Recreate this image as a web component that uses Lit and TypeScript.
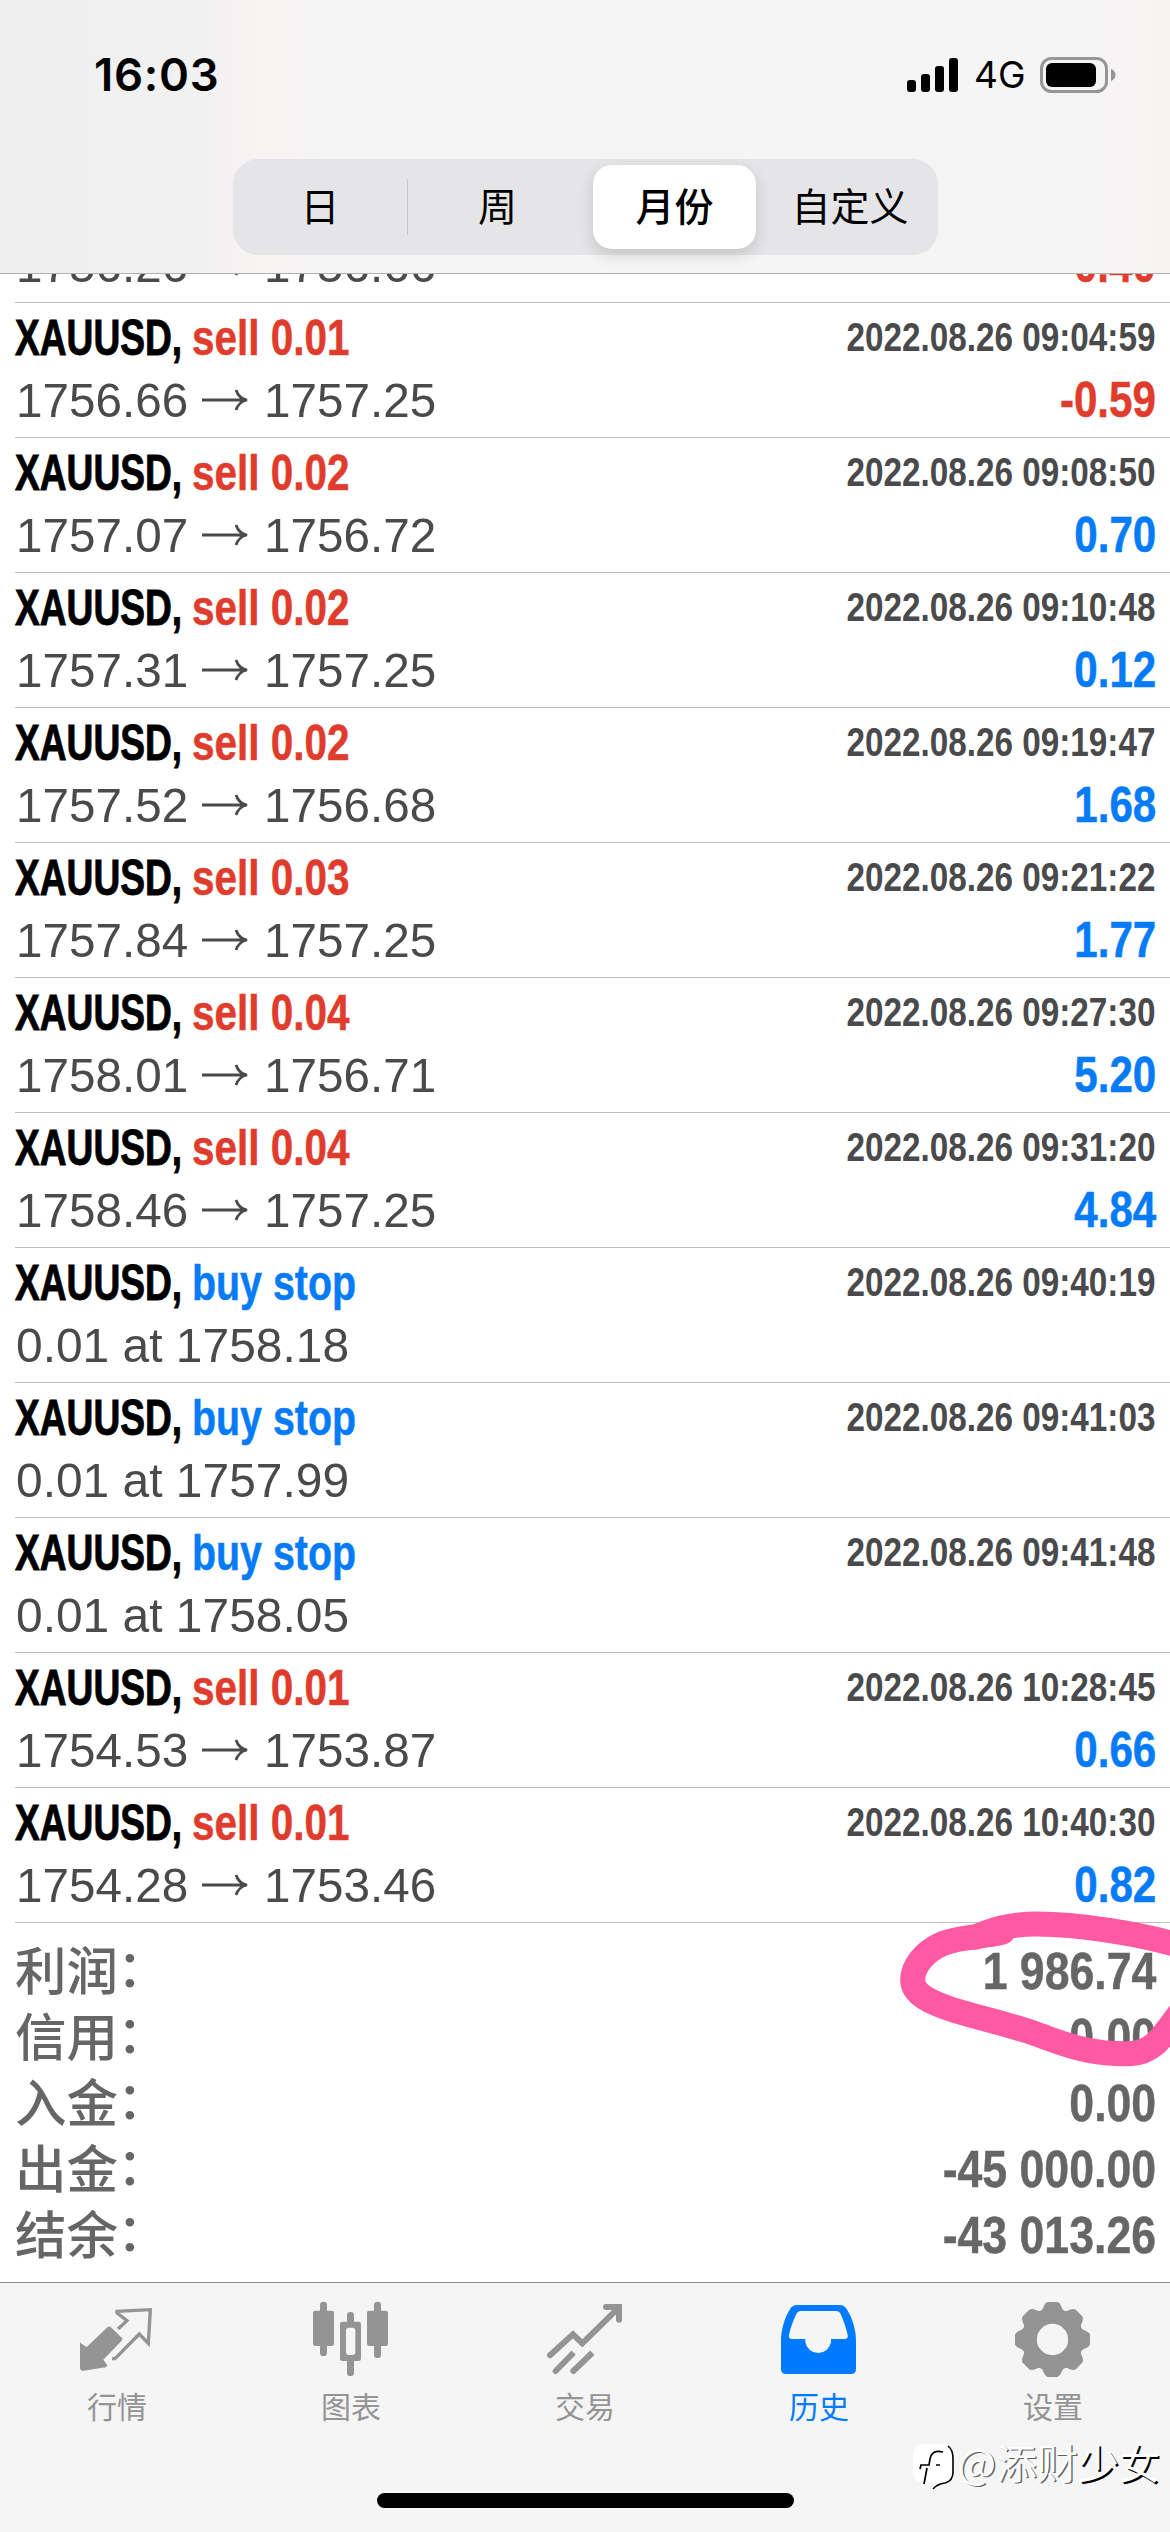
import { LitElement, html, svg, css } from "lit";
import { customElement, property } from "lit/decorators.js";
import { classMap } from "lit/directives/class-map.js";

interface Deal {
  side: "sell" | "buy";
  label: string;
  time: string;
  open: string;
  close?: string;
  profit?: string;
  scrolled?: boolean;
}

const sell = (lot: string, time: string, open: string, close: string, profit: string): Deal => ({
  side: "sell", label: `sell ${lot}`, time: `2022.08.26 ${time}`, open, close, profit,
});
const stop = (time: string, open: string): Deal => ({
  side: "buy", label: "buy stop", time: `2022.08.26 ${time}`, open,
});

const DEALS: Deal[] = [
  { side: "sell", label: "", time: "", open: "1756.26", close: "1756.66", profit: "-0.40", scrolled: true },
  sell("0.01", "09:04:59", "1756.66", "1757.25", "-0.59"),
  sell("0.02", "09:08:50", "1757.07", "1756.72", "0.70"),
  sell("0.02", "09:10:48", "1757.31", "1757.25", "0.12"),
  sell("0.02", "09:19:47", "1757.52", "1756.68", "1.68"),
  sell("0.03", "09:21:22", "1757.84", "1757.25", "1.77"),
  sell("0.04", "09:27:30", "1758.01", "1756.71", "5.20"),
  sell("0.04", "09:31:20", "1758.46", "1757.25", "4.84"),
  stop("09:40:19", "0.01 at 1758.18"),
  stop("09:41:03", "0.01 at 1757.99"),
  stop("09:41:48", "0.01 at 1758.05"),
  sell("0.01", "10:28:45", "1754.53", "1753.87", "0.66"),
  sell("0.01", "10:40:30", "1754.28", "1753.46", "0.82"),
];

const TOTALS = [
  ["利润", "1 986.74"],
  ["信用", "0.00"],
  ["入金", "0.00"],
  ["出金", "-45 000.00"],
  ["结余", "-43 013.26"],
];

@customElement("deal-row")
export class DealRow extends LitElement {
  @property({ attribute: false }) deal!: Deal;

  static styles = css`
    :host { display: block; flex: none; margin-left: 15px; border-bottom: 1px solid #bfbfc1; padding: 0 15px 5px 0; }
    .line { display: flex; height: 61px; line-height: 62px; white-space: pre; padding-top: 4px; font-size: 50px; }
    .line.second { height: 64px; line-height: 64px; padding-top: 0; font-size: 49px; color: #4a4a4c; }
    .squeeze { display: inline-block; transform-origin: 0 50%; }
    .symbol { flex: none; width: 177px; font-weight: 700; color: #000; -webkit-text-stroke: 0.9px #000; }
    .symbol .squeeze { transform: scaleX(0.743); }
    .action { flex: 1; font-weight: 700; -webkit-text-stroke: 0.5px currentColor; }
    .sell { color: #e03c2d; }
    .buy { color: #067bf8; }
    .sell .squeeze { transform: scaleX(0.81); }
    .buy .squeeze { transform: scaleX(0.787); }
    .time { font-size: 40px; font-weight: 700; color: #4a4a4c; line-height: 60px; transform: scaleX(0.832); transform-origin: 100% 50%; }
    .price { flex: none; padding-left: 1px; }
    .price .squeeze { transform: scaleX(0.978); }
    .price.from { width: 183px; }
    .price.from .squeeze, .price.to .squeeze { transform: scaleX(0.972); }
    .arrow { flex: none; width: 64px; display: flex; align-items: center; }
    .arrow svg { width: 52px; height: 26px; display: block; }
    .profit { margin-left: auto; font-size: 50px; font-weight: 700; transform: translateX(1px) scaleX(0.843); transform-origin: 100% 50%; -webkit-text-stroke: 0.5px currentColor; }
    .neg { color: #e03c2d; }
    .pos { color: #067bf8; }
  `;

  render() {
    const d = this.deal;
    const loss = !!d.profit && d.profit.startsWith("-");
    return html`
      ${d.scrolled ? null : html`<div class="line">
        <span class="symbol"><span class="squeeze">XAUUSD,</span></span>
        <span class=${`action ${d.side}`}><span class="squeeze">${d.label}</span></span>
        <span class="time">${d.time}</span>
      </div>`}
      <div class="line second">
        <span class=${classMap({ price: true, from: !!d.close })}><span class="squeeze">${d.open}</span></span>
        ${d.close
          ? html`<span class="arrow"><svg viewBox="0 0 52 26"><path d="M3 13H47M37 3C39 9 43 12 48 13C43 14 39 17 37 23" fill="none" stroke="#4a4a4c" stroke-width="2.8"/></svg></span>
              <span class="price to"><span class="squeeze">${d.close}</span></span>`
          : null}
        ${d.profit ? html`<span class=${classMap({ profit: true, neg: loss, pos: !loss })}>${d.profit}</span>` : null}
      </div>
    `;
  }
}

const TEETH = [0, 45, 90, 135, 180, 225, 270, 315];

const TABS = [
  {
    name: "行情", box: "21 0 240 240",
    art: svg`
      <path d="M34 146L50 156L113 96Q118 92 123 97L156 129Q159 133 155 137L100 194L112 211L108 217L40 227Q31 228 30 219V141Z" fill="currentColor"/>
      <path d="M144 102L171 77L141 54V49L241 44L235 145L208 117L135 191L126 191" fill="none" stroke="currentColor" stroke-width="10"/>`,
  },
  {
    name: "图表", box: "723 0 240 240",
    art: svg`
      <g fill="currentColor">
        <rect x="729" y="47" width="63" height="106" rx="7"/><rect x="750" y="20" width="21" height="163" rx="10"/>
        <rect x="891" y="47" width="63" height="106" rx="7"/><rect x="912" y="20" width="21" height="169" rx="10"/>
        <rect x="831" y="51" width="21" height="45" rx="10"/><rect x="831" y="184" width="21" height="59" rx="10"/>
        <path fill-rule="evenodd" d="M817 80H866Q873 80 873 87V191Q873 198 866 198H817Q810 198 810 191V87Q810 80 817 80ZM837 98Q828 98 828 107V171Q828 180 837 180H847Q856 180 856 171V107Q856 98 847 98Z"/>
      </g>`,
  },
  {
    name: "交易", box: "15 0 240 240",
    art: svg`
      <g fill="none" stroke="currentColor" stroke-width="18" stroke-linecap="round">
        <path d="M30 181L99 118L127 145L234 40"/><path d="M198 36H237V74" stroke-linejoin="miter"/>
        <path d="M47 228L94 180M100 228L150 180"/>
        <path d="M94 180L101 173M150 180L157 173" stroke-linecap="butt"/>
      </g>`,
  },
  {
    name: "历史", box: "717 0 240 240", active: true,
    art: svg`
      <path fill="currentColor" fill-rule="evenodd" d="M770 30H900Q912 30 919 41C938 68 948 106 948 136V222Q948 237 933 237H738Q723 237 723 222V136C723 106 733 68 751 41Q758 30 770 30ZM783 48Q773 48 769 57C760 76 752 97 747 120Q745 132 756 132H796V142A39 38 0 0 0 873 142V132H914Q925 132 923 120C918 97 910 76 902 57Q898 48 888 48Z"/>`,
  },
  {
    name: "设置", box: "369 15 240 240",
    art: svg`
      <circle cx="487.500" cy="148.500" r="67" fill="none" stroke="currentColor" stroke-width="40"/>
      ${TEETH.map((a) => svg`<path transform="rotate(${a} 487.5 148.5)" d="M474 42H501C507 44 508 52 512 60Q516 67 526 71L512 92H463L449 71Q459 67 463 60C467 52 468 44 474 42Z" fill="currentColor" stroke="currentColor" stroke-width="12" stroke-linejoin="round"/>`)}`,
  },
];

@customElement("app-root")
export class AppRoot extends LitElement {
  static styles = css`
    :host {
      display: flex; flex-direction: column; position: relative; box-sizing: border-box;
      width: 1170px; height: 2532px; overflow: hidden; background: #fff;
      font-family: "Liberation Sans", "Noto Sans CJK SC", sans-serif;
    }
    .header {
      flex: none; height: 273px; border-bottom: 1px solid #b0b0b2;
      background: linear-gradient(90deg, #efefef 0%, #f2f1f1 17%, #f7f4f3 23%, #f5f5f5 28%, #f5f5f5 85%, #f6f4f5 95%, #f8f3f2 100%);
    }
    .status { display: flex; align-items: center; height: 149px; padding: 0 54px 0 94px; }
    .clock { flex: 1; font: 600 45.500px/1 Inter, sans-serif; letter-spacing: 0.7px; }
    .bars { width: 52px; height: 36px; margin-right: 15px; }
    .net { font: 400 37px/1 Inter, sans-serif; width: 66px; white-space: nowrap; }
    .battery { width: 76px; height: 36px; }
    .segments {
      display: grid; grid-template-columns: 175px 179px 175px 176px; margin: 10px 0 0 233px;
      width: 705px; height: 96px; border-radius: 25px; background: #e5e5e7;
    }
    .seg { display: flex; align-items: center; justify-content: center; padding-bottom: 5px; font: 400 39px/1 "Noto Sans CJK SC", sans-serif; color: #000; }
    .seg.first { border-right: 1px solid #c9c9cc; margin: 20px 0; }
    .seg.on { font-weight: 500; background: #fff; border-radius: 19px; margin: 6px; box-shadow: 0 6px 16px rgba(0, 0, 0, 0.14); }
    .list { flex: none; height: 1649px; display: flex; flex-direction: column; justify-content: flex-end; overflow: hidden; }
    .totals { flex: none; box-sizing: border-box; height: 359px; padding: 15px 15px 0; color: #666; }
    .total { display: flex; justify-content: space-between; height: 66px; line-height: 66px; white-space: nowrap; }
    .total .name { font-family: "Noto Sans CJK SC", sans-serif; font-size: 51.500px; line-height: 60px; font-weight: 500; }
    .total .colon { position: relative; top: -3px; left: -1px; }
    .total .value { font-size: 52.500px; font-weight: 700; transform: translateX(1px) scaleX(0.85); transform-origin: 100% 50%; -webkit-text-stroke: 0.5px currentColor; }
    .tabbar { flex: 1; border-top: 1px solid #8c8c8e; background: #f5f5f5; display: flex; flex-direction: column; }
    .tabs { display: grid; grid-template-columns: repeat(5, 1fr); height: 210px; }
    .tab { display: flex; flex-direction: column; align-items: center; padding-top: 12px; color: #949494; font: 400 30px/36px "Noto Sans CJK SC", sans-serif; }
    .tab.active { color: #007aff; }
    .icon { width: 80px; height: 80px; margin-bottom: 12px; overflow: visible; }
    .home { width: 417px; height: 15px; border-radius: 8px; background: #000; margin: 0 auto; }
    .marker { position: absolute; left: 820px; top: 1880px; width: 350px; height: 210px; }
    .watermark { position: absolute; right: 10px; top: 2438px; display: flex; align-items: center; color: #fff; font: 350 41px/50px "Noto Sans CJK SC", sans-serif; white-space: nowrap; }
    .handle { position: relative; top: -3px; text-shadow: 1.500px 1.200px 0.500px rgba(0, 0, 0, 0.6); }
    .handle b { font-weight: 350; text-shadow: 1.700px 1.500px 0.300px #000; }
    .logo { width: 46px; height: 52px; margin-right: 2px; position: relative; top: 2px; }
  `;

  render() {
    return html`
      <header class="header">
        <div class="status">
          <span class="clock">16:03</span>
          <svg class="bars" viewBox="0 0 52 36">
            <rect x="0" y="23" width="9" height="12" rx="3"/><rect x="14" y="17" width="9" height="18" rx="3"/>
            <rect x="28" y="9" width="9" height="26" rx="3"/><rect x="42" y="1" width="9" height="34" rx="3"/>
          </svg>
          <span class="net">4G</span>
          <svg class="battery" viewBox="0 0 76 36">
            <rect x="1.500" y="1.500" width="65" height="33" rx="10" fill="none" stroke="#969698" stroke-width="3"/>
            <rect x="6" y="6" width="50" height="24" rx="6"/>
            <path d="M71 12C77 14 77 22 71 24Z" fill="#969698"/>
          </svg>
        </div>
        <nav class="segments">
          <span class="seg first">日</span><span class="seg">周</span><span class="seg on">月份</span><span class="seg">自定义</span>
        </nav>
      </header>
      <main class="list">${DEALS.map((d) => html`<deal-row .deal=${d}></deal-row>`)}</main>
      <section class="totals">
        ${TOTALS.map(([name, value]) => html`<div class="total"><span class="name">${name}<span class="colon">：</span></span><span class="value">${value}</span></div>`)}
      </section>
      <footer class="tabbar">
        <nav class="tabs">
          ${TABS.map((t) => html`<div class=${classMap({ tab: true, active: !!t.active })}>
            <svg class="icon" viewBox=${t.box}>${t.art}</svg><span>${t.name}</span>
          </div>`)}
        </nav>
        <div class="home"></div>
      </footer>
      <svg class="marker" viewBox="0 0 1050 630" fill="none" stroke="#ff59a4" stroke-width="75" stroke-linecap="round" stroke-linejoin="round">
        <path d="M1090 200C960 160 770 132 650 132C570 132 520 148 465 172"/>
        <path d="M548 156C480 172 420 170 370 190C310 215 278 262 278 300C278 345 340 370 400 390C500 420 560 432 640 459C700 480 745 500 800 510C850 520 890 522 930 521C1000 518 1025 475 1090 385"/>
      </svg>
      <div class="watermark">
        <svg class="logo" viewBox="0 0 46 52">
          <path d="M13 4H31Q43 4 43 16V32Q43 41 35 43Q27 44 23 51L23 43H15Q3 43 3 31V16Q3 4 13 4Z" fill="#fff"/>
          <path d="M38 6Q43 10 43 18V32Q43 41 35 43Q27 44 23 49" fill="none" stroke="#000" stroke-width="1.600"/>
          <path d="M33 12Q22 9 20 19L19 25H11L10 29M17 28L14 44M26 25H30" fill="none" stroke="#000" stroke-width="1.700"/>
        </svg>
        <span class="handle">@添财<b>少女</b></span>
      </div>
    `;
  }
}
